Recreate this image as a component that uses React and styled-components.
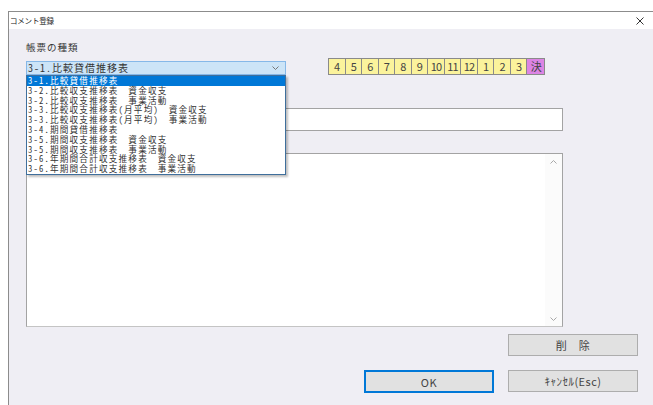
import React from "react";
import styled, { createGlobalStyle } from "styled-components";

const GlobalStyle = createGlobalStyle`
  body {
    margin: 0;
    background: #ffffff;
    font-family: "Noto Sans CJK JP", "Liberation Sans", sans-serif;
    color: #1a1a1a;
  }
`;

const reportTypes = [
  "3-1.比較貸借推移表",
  "3-2.比較収支推移表　資金収支",
  "3-2.比較収支推移表　事業活動",
  "3-3.比較収支推移表(月平均)　資金収支",
  "3-3.比較収支推移表(月平均)　事業活動",
  "3-4.期間貸借推移表",
  "3-5.期間収支推移表　資金収支",
  "3-5.期間収支推移表　事業活動",
  "3-6.年期間合計収支推移表　資金収支",
  "3-6.年期間合計収支推移表　事業活動",
];

const months = ["4", "5", "6", "7", "8", "9", "10", "11", "12", "1", "2", "3", "決"];

function App() {
  return (
    <>
      <GlobalStyle />
      <Window>
        <TitleBar>
          <Title>コメント登録</Title>
          <CloseIcon viewBox="0 0 8 8">
            <path d="M0.5 0.5 L7.5 7.5 M7.5 0.5 L0.5 7.5" stroke="#333" strokeWidth="1" />
          </CloseIcon>
        </TitleBar>

        <Body>
          <FieldLabel>帳票の種類</FieldLabel>
          <TopRow>
            <SelectWrap>
              <Select>
                <SelectText>{reportTypes[0]}</SelectText>
                <Chevron viewBox="0 0 7 4">
                  <polyline points="0.5,0.5 3.5,3.5 6.5,0.5" fill="none" stroke="#777" strokeWidth="1" />
                </Chevron>
              </Select>
              <OptionList>
                {reportTypes.map((t, i) => (
                  <Option key={t} $active={i === 0}>{t}</Option>
                ))}
              </OptionList>
            </SelectWrap>

            <MonthStrip>
              {months.map((m) => (
                <MonthCell key={m} $closing={m === "決"}>{m}</MonthCell>
              ))}
            </MonthStrip>
          </TopRow>

          {/* the title / comment captions sit under the open list */}
          <TextBox $gap={33} />

          <Memo>
            <MemoArea />
            <ScrollBar>
              <ScrollArrow viewBox="0 0 7 4">
                <polyline points="0.5,3.5 3.5,0.5 6.5,3.5" fill="none" stroke="#a8a8a8" strokeWidth="1" />
              </ScrollArrow>
              <ScrollArrow viewBox="0 0 7 4">
                <polyline points="0.5,0.5 3.5,3.5 6.5,0.5" fill="none" stroke="#a8a8a8" strokeWidth="1" />
              </ScrollArrow>
            </ScrollBar>
          </Memo>

          <ButtonRow $gap={7}>
            <Button>削　除</Button>
          </ButtonRow>
          <ButtonRow $gap={14}>
            <Button $default>OK</Button>
            <Button>ｷｬﾝｾﾙ(Esc)</Button>
          </ButtonRow>
        </Body>
      </Window>
    </>
  );
}

const Window = styled.div`
  margin: 11px 0 0 8px;
  height: 394px;
  border-top: 1px solid #8c8c8c;
  border-left: 1px solid #8c8c8c;
  background: #efeef4;
  overflow: hidden;
`;

const TitleBar = styled.div`
  height: 17px;
  background: #ffffff;
  display: flex;
  align-items: center;
  justify-content: space-between;
  padding: 0 9px 0 1px;
`;

const Title = styled.span`
  font-size: 7.5px;
  letter-spacing: -0.2px;
  color: #222;
`;

const CloseIcon = styled.svg`
  width: 8px;
  height: 8px;
`;

const Body = styled.div`
  display: flex;
  flex-direction: column;
  width: 612px;
  padding: 11px 0 0 17px;
`;

const FieldLabel = styled.div`
  font-size: 9.5px;
  letter-spacing: 1px;
  line-height: 14px;
  height: 14px;
  color: #333;
`;

const TopRow = styled.div`
  display: flex;
  align-items: flex-start;
  margin-top: 4px;
  position: relative;
  z-index: 2;
`;

const SelectWrap = styled.div`
  position: relative;
  width: 260px;
  margin-top: 3px;
`;

const Select = styled.div`
  height: 14px;
  box-sizing: border-box;
  border: 1px solid #86b8e8;
  background: #cce4f7;
  display: flex;
  align-items: center;
  justify-content: space-between;
  padding: 0 6px 0 1px;
`;

const SelectText = styled.span`
  font-family: "Noto Sans Mono CJK JP", "Noto Sans CJK JP", monospace;
  font-size: 10px;
  letter-spacing: 1px;
  line-height: 12px;
  color: #333;
`;

const Chevron = styled.svg`
  width: 7px;
  height: 4px;
`;

const OptionList = styled.div`
  position: absolute;
  top: 100%;
  left: 0;
  width: 260px;
  box-sizing: border-box;
  background: #ffffff;
  border: 1px solid #3f6f9c;
  box-shadow: 2px 2px 2px rgba(0, 0, 0, 0.25);
`;

const Option = styled.div`
  font-family: "Noto Sans Mono CJK JP", "Noto Sans CJK JP", monospace;
  font-size: 8.6px;
  letter-spacing: 1.2px;
  line-height: 9.8px;
  height: 9.8px;
  white-space: nowrap;
  padding-left: 1px;
  background: ${(p) => (p.$active ? "#0078d7" : "transparent")};
  color: ${(p) => (p.$active ? "#ffffff" : "#333")};
`;

const MonthStrip = styled.div`
  display: grid;
  grid-template-columns: repeat(13, 1fr);
  width: 217px;
  height: 17px;
  box-sizing: border-box;
  margin-left: 42px;
  border: 1px solid #8a8a8a;
`;

const MonthCell = styled.div`
  background: ${(p) => (p.$closing ? "#dc84e4" : "#fbf39c")};
  border-right: 1px solid #8a8a8a;
  font-size: 11px;
  line-height: 15px;
  text-align: center;
  letter-spacing: -0.8px;
  color: #444;

  &:last-child {
    border-right: none;
  }
`;

const TextBox = styled.div`
  margin-top: ${(p) => p.$gap}px;
  width: 537px;
  height: 23px;
  box-sizing: border-box;
  background: #ffffff;
  border: 1px solid #a3a3a3;
`;

const Memo = styled.div`
  margin-top: 22px;
  width: 537px;
  height: 174px;
  box-sizing: border-box;
  background: #ffffff;
  border: 1px solid #a3a3a3;
  border-bottom-color: #c4c4c4;
  display: flex;
`;

const MemoArea = styled.div`
  flex: 1;
`;

const ScrollBar = styled.div`
  width: 17px;
  display: flex;
  flex-direction: column;
  justify-content: space-between;
  align-items: center;
  padding: 6px 0 5px;
  background: #fbfbfb;
`;

const ScrollArrow = styled.svg`
  width: 7px;
  height: 4px;
`;

const ButtonRow = styled.div`
  display: flex;
  justify-content: flex-end;
  gap: 14px;
  margin-top: ${(p) => p.$gap}px;
`;

const Button = styled.button`
  width: 130px;
  height: ${(p) => (p.$default ? 23 : 22)}px;
  box-sizing: border-box;
  background: #e1e1e1;
  border: ${(p) => (p.$default ? "2px solid #0078d7" : "1px solid #adadad")};
  font-family: "Noto Sans CJK JP", "Liberation Sans", sans-serif;
  font-size: 11px;
  font-weight: 400;
  letter-spacing: 0.5px;
  color: #444;
  padding: 0;
  cursor: pointer;
`;

export default App;
